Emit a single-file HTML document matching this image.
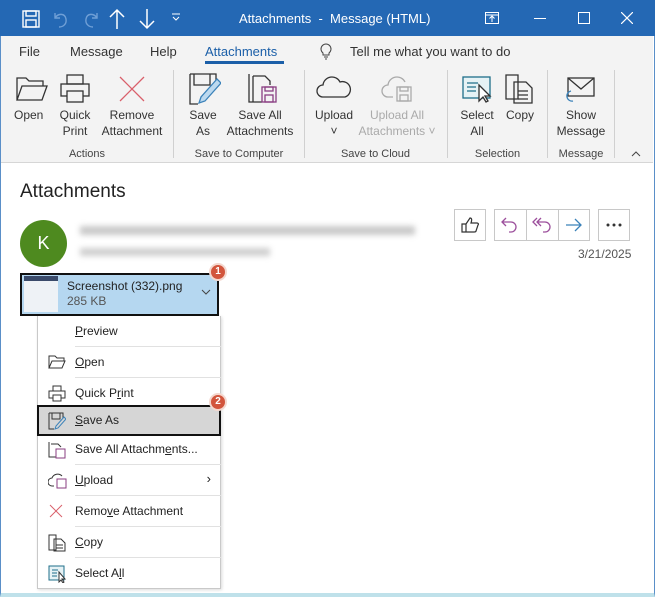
<!DOCTYPE html>
<html><head><meta charset="utf-8"><style>
*{box-sizing:border-box;margin:0;padding:0}
body{width:655px;height:597px;background:#fff;font-family:"Liberation Sans","DejaVu Sans",sans-serif;position:relative;overflow:hidden;color:#262626}
.a{position:absolute}
.tb{left:0;top:0;width:655px;height:36px;background:#2468b4}
.tt{color:#fff;font-size:13px}
.rib{left:1px;top:36px;width:652px;height:127px;background:#f3f3f3;border-bottom:1px solid #d6d6d6}
.lbl{font-size:12px;color:#333;text-align:center;line-height:16px}
.grp{font-size:11px;color:#444;text-align:center}
.sep{width:1px;background:#d0d0d0;top:70px;height:88px}
.mi{left:37px;width:184px;height:31px;font-size:12px;color:#222}
.mi span{position:absolute;left:38px;top:8px}
.mi i{position:absolute;left:38px;right:0;bottom:0;border-bottom:1px solid #e1e1e1}
.mi svg{position:absolute;left:11px;top:7px}
.btn{border:1px solid #c8c8c8;background:#fff;height:32px;top:209px}
.badge{width:18px;height:18px;border-radius:50%;background:#d2553c;border:2px solid #f4d8cf;color:#fff;font-size:10px;text-align:center;line-height:14px;font-weight:bold}
</style></head><body>
<div class="a" style="left:0;top:0;width:655px;height:597px;border:1px solid #5a8fc8;border-bottom:4px solid #bfe1ea"></div>
<div class="a tb"></div>
<svg class="a" style="left:22px;top:10px" width="18" height="18" viewBox="0 0 18 18" fill="none" stroke="#fff" stroke-width="1.4"><rect x="1" y="1" width="16" height="16"/><rect x="4" y="1" width="10" height="5"/><rect x="4" y="10" width="10" height="7"/></svg>
<svg class="a" style="left:52px;top:10px" width="50" height="18" fill="none" stroke="#6f9fd6" stroke-width="1.4"><path d="M3 3v5h5M3 8c3-5 10-5 11 1s-4 8-7 8"/><path d="M45 3v5h-5M45 8c-3-5-10-5-11 1s4 8 7 8"/></svg>
<svg class="a" style="left:108px;top:8px" width="50" height="22" fill="none" stroke="#fff" stroke-width="1.5"><path d="M9 21V2M2 9l7-7 7 7M39 1v19M32 13l7 7 7-7"/></svg>
<svg class="a" style="left:171px;top:13px" width="10" height="10" fill="none" stroke="#fff"><path d="M1 1h8M2 4l3 3 3-3"/></svg>
<div class="a tt" style="left:239px;top:11px">Attachments &nbsp;- &nbsp;Message (HTML)</div>
<svg class="a" style="left:485px;top:12px" width="14" height="12" fill="none" stroke="#fff"><rect x=".5" y=".5" width="13" height="11"/><path d="M7 10V4M4.5 6.5 7 4l2.5 2.5M.5 3h13"/></svg>
<div class="a" style="left:534px;top:18px;width:12px;height:1px;background:#fff"></div>
<div class="a" style="left:578px;top:12px;width:12px;height:12px;border:1px solid #fff"></div>
<svg class="a" style="left:621px;top:12px" width="12" height="12" stroke="#fff" stroke-width="1.2"><path d="M0 0l12 12M12 0 0 12"/></svg>
<div class="a rib"></div>
<div class="a" style="top:44px;left:19px;font-size:13px;color:#333">File</div>
<div class="a" style="top:44px;left:70px;font-size:13px;color:#333">Message</div>
<div class="a" style="top:44px;left:150px;font-size:13px;color:#333">Help</div>
<div class="a" style="top:44px;left:205px;font-size:13px;color:#1b5fa8">Attachments</div>
<div class="a" style="top:61px;left:205px;width:79px;height:3px;background:#1b5fa8"></div>
<svg class="a" style="left:320px;top:43px" width="12" height="17" fill="none" stroke="#444"><path d="M3 10a5 5 0 1 1 6 0v2H3zM4 14h4M5 16h2"/></svg>
<div class="a" style="top:44px;left:350px;font-size:13px;color:#333">Tell me what you want to do</div>
<svg class="a" style="left:16px;top:76px" width="32" height="26" fill="none" stroke="#333" stroke-width="1.3"><path d="M1 24V2h9l3 3h14v5M1 24l5-14h25l-5 14z"/></svg>
<svg class="a" style="left:60px;top:74px" width="30" height="30" fill="none" stroke="#333" stroke-width="1.3"><rect x="7" y="1" width="16" height="9"/><rect x="1" y="10" width="28" height="12"/><rect x="7" y="17" width="16" height="11" fill="#f3f3f3"/></svg>
<svg class="a" style="left:119px;top:76px" width="26" height="26" stroke="#d9606b" stroke-width="1.3"><path d="M1 1l24 24M25 1 1 25"/></svg>
<svg class="a" style="left:189px;top:73px" width="32" height="32" fill="none" stroke="#333" stroke-width="1.3"><path d="M1 1h26v10M1 1v30h8M5 1v11h16V1"/><path d="M28 6 12 24l-2 6 6-2 16-18z" stroke="#3b82b9" fill="#bcd9ef"/></svg>
<svg class="a" style="left:248px;top:73px" width="30" height="32" fill="none" stroke="#333" stroke-width="1.3"><path d="M5 3h12l5 5v4M1 1v28h13M5 3v26"/><rect x="14" y="14" width="14" height="15" stroke="#8a3e82"/><rect x="17" y="14" width="8" height="4" stroke="#8a3e82"/><rect x="17" y="22" width="8" height="7" stroke="#8a3e82"/></svg>
<svg class="a" style="left:316px;top:76px" width="36" height="22" fill="none" stroke="#333" stroke-width="1.3"><path d="M7 21a6 6 0 0 1 0-12 9 9 0 0 1 17-3 7 7 0 0 1 5 15z"/></svg>
<svg class="a" style="left:381px;top:76px" width="36" height="26" fill="none" stroke="#aaa" stroke-width="1.3"><path d="M12 21H7a6 6 0 0 1 0-12 9 9 0 0 1 17-3"/><rect x="16" y="11" width="14" height="14"/><rect x="19" y="11" width="8" height="4"/><rect x="19" y="19" width="8" height="6"/></svg>
<svg class="a" style="left:462px;top:76px" width="32" height="28" fill="none" stroke="#1f6f8a" stroke-width="1.3"><rect x="1" y="1" width="27" height="21" fill="#e6f2f5"/><path d="M5 7h11M5 11h9M5 15h9"/><path d="M17 9v16l4-4 3 5 2-1-3-5h5z" fill="#fff" stroke="#333"/></svg>
<svg class="a" style="left:505px;top:74px" width="30" height="30" fill="none" stroke="#333" stroke-width="1.3"><path d="M1 1h12v24H1zM9 8h12l6 6v15H9z" fill="#f3f3f3"/><path d="M13 17h10M13 21h10M13 25h10"/></svg>
<svg class="a" style="left:565px;top:77px" width="32" height="28" fill="none" stroke="#333" stroke-width="1.3"><rect x="3" y="1" width="26" height="18"/><path d="M3 1l13 11L29 1"/><path d="M6 14a5 5 0 0 0 2 10" stroke="#3b82b9"/></svg>
<div class="a lbl" style="left:14px;top:107px">Open</div>
<div class="a lbl" style="left:57px;top:107px;width:36px">Quick<br>Print</div>
<div class="a lbl" style="left:98px;top:107px;width:68px">Remove<br>Attachment</div>
<div class="a lbl" style="left:185px;top:107px;width:36px">Save<br>As</div>
<div class="a lbl" style="left:225px;top:107px;width:70px">Save All<br>Attachments</div>
<div class="a lbl" style="left:313px;top:107px;width:42px">Upload<br>˅</div>
<div class="a lbl" style="left:356px;top:107px;width:82px;color:#aaa">Upload All<br>Attachments ˅</div>
<div class="a lbl" style="left:457px;top:107px;width:40px">Select<br>All</div>
<div class="a lbl" style="left:502px;top:107px;width:36px">Copy</div>
<div class="a lbl" style="left:553px;top:107px;width:56px">Show<br>Message</div>
<div class="a grp" style="left:57px;top:148px;width:60px">Actions</div>
<div class="a grp" style="left:180px;top:148px;width:118px">Save to Computer</div>
<div class="a grp" style="left:318px;top:148px;width:115px">Save to Cloud</div>
<div class="a grp" style="left:455px;top:148px;width:85px">Selection</div>
<div class="a grp" style="left:553px;top:148px;width:56px">Message</div>
<svg class="a" style="left:631px;top:151px" width="10" height="6" fill="none" stroke="#444"><path d="M1 5l4-4 4 4"/></svg>
<div class="a sep" style="left:173px"></div><div class="a sep" style="left:304px"></div><div class="a sep" style="left:447px"></div><div class="a sep" style="left:547px"></div><div class="a sep" style="left:614px"></div>
<div class="a" style="left:20px;top:181px;font-size:19px;color:#222">Attachments</div>
<div class="a" style="left:20px;top:220px;width:47px;height:47px;border-radius:50%;background:#4e8a1f;color:#fff;font-size:18px;text-align:center;line-height:47px">K</div>
<div class="a" style="left:80px;top:226px;width:335px;height:9px;background:#c9c9c9;filter:blur(3px)"></div>
<div class="a" style="left:80px;top:248px;width:190px;height:8px;background:#cfcfcf;filter:blur(3px)"></div>
<div class="a btn" style="left:454px;width:32px"></div>
<svg class="a" style="left:461px;top:216px" width="18" height="17" fill="none" stroke="#333" stroke-width="1.2"><path d="M1 8h4v8H1zM5 8l4-6c2 0 2 2 1 5h6c1 0 2 1 1 2l-2 6c0 1-1 1-2 1H5"/></svg>
<div class="a btn" style="left:494px;width:96px"></div>
<div class="a" style="left:526px;top:209px;width:1px;height:32px;background:#c8c8c8"></div>
<div class="a" style="left:558px;top:209px;width:1px;height:32px;background:#c8c8c8"></div>
<svg class="a" style="left:500px;top:216px" width="20" height="18" fill="none" stroke="#9c4f9c" stroke-width="1.3"><path d="M6 2 2 6l4 4M2 6h9a5 5 0 0 1 0 10H9"/></svg>
<svg class="a" style="left:532px;top:216px" width="22" height="18" fill="none" stroke="#9c4f9c" stroke-width="1.3"><path d="M5 2 1 6l4 4M9 2 5 6l4 4M5 6h8a5 5 0 0 1 0 10h-2"/></svg>
<svg class="a" style="left:565px;top:218px" width="18" height="14" fill="none" stroke="#3b82b9" stroke-width="1.3"><path d="M1 7h15M10 1l6 6-6 6"/></svg>
<div class="a btn" style="left:598px;width:32px"></div>
<svg class="a" style="left:606px;top:223px" width="16" height="4" fill="#333"><circle cx="2" cy="2" r="1.5"/><circle cx="8" cy="2" r="1.5"/><circle cx="14" cy="2" r="1.5"/></svg>
<div class="a" style="left:578px;top:247px;font-size:12px;color:#555">3/21/2025</div>
<div class="a" style="left:20px;top:273px;width:199px;height:43px;background:#b5d7f0;border:2px solid #111"></div>
<div class="a" style="left:24px;top:276px;width:34px;height:36px;background:#eef2f6;border-top:5px solid #3a4a6a"></div>
<div class="a" style="left:67px;top:279px;font-size:12px;color:#222">Screenshot (332).png</div>
<div class="a" style="left:67px;top:294px;font-size:12px;color:#555">285 KB</div>
<svg class="a" style="left:201px;top:289px" width="10" height="6" fill="none" stroke="#444"><path d="M1 1l4 4 4-4"/></svg>
<div class="a badge" style="left:209px;top:263px">1</div>
<div class="a" style="left:37px;top:316px;width:184px;height:273px;background:#fff;border:1px solid #c9c9c9;border-top:none;box-shadow:1px 1px 3px rgba(0,0,0,.15)"></div>
<div class="a mi" style="top:316px"><span><u>P</u>review</span><i></i></div>
<div class="a mi" style="top:347px"><svg width="18" height="16" fill="none" stroke="#333"><path d="M1 14V2h6l2 2h7v3M1 14l3-7h13l-3 7z"/></svg><span><u>O</u>pen</span><i></i></div>
<div class="a mi" style="top:378px"><svg width="18" height="18" fill="none" stroke="#333"><rect x="5" y="1" width="8" height="5"/><rect x="1" y="6" width="16" height="7"/><rect x="5" y="10" width="8" height="6" fill="#fff"/></svg><span>Quick P<u>r</u>int</span></div>
<div class="a" style="left:37px;top:405px;width:184px;height:31px;background:#d6d6d6;border:2px solid #111"></div>
<div class="a mi" style="top:405px"><svg width="18" height="18" fill="none" stroke="#333"><path d="M1 1h14v5M1 1v16h5M4 1v6h8V1"/><path d="M16 5 8 14l-1 3 3-1 8-9z" stroke="#3b82b9"/></svg><span><u>S</u>ave As</span></div>
<div class="a badge" style="left:209px;top:393px">2</div>
<div class="a mi" style="top:434px"><svg width="18" height="18" fill="none" stroke="#333"><path d="M1 1v15h7M3 3h7l3 3"/><rect x="8" y="8" width="9" height="9" stroke="#8a3e82"/></svg><span>Save All Attachm<u>e</u>nts...</span><i></i></div>
<div class="a mi" style="top:465px"><svg width="20" height="18" fill="none" stroke="#333"><path d="M6 14H4a4 4 0 0 1 0-8 6 6 0 0 1 10-2"/><rect x="9" y="7" width="9" height="9" stroke="#8a3e82"/></svg><span><u>U</u>pload</span><b style="position:absolute;right:10px;top:6px;font-weight:normal;font-size:13px">›</b><i></i></div>
<div class="a mi" style="top:496px"><svg width="16" height="16" stroke="#d9606b"><path d="M2 2l12 12M14 2 2 14"/></svg><span>Remo<u>v</u>e Attachment</span><i></i></div>
<div class="a mi" style="top:527px"><svg width="18" height="18" fill="none" stroke="#333"><path d="M1 1h7v15H1zM6 5h7l4 4v8H6z" fill="#fff"/><path d="M8 11h7M8 14h7"/></svg><span><u>C</u>opy</span><i></i></div>
<div class="a mi" style="top:558px"><svg width="20" height="18" fill="none" stroke="#1f6f8a"><rect x="1" y="1" width="15" height="14" fill="#e6f2f5"/><path d="M4 5h6M4 8h5M4 11h5"/><path d="M11 7v10l2-2 2 3 1-1-2-3h3z" fill="#fff" stroke="#333"/></svg><span>Select A<u>l</u>l</span></div>
</body></html>
